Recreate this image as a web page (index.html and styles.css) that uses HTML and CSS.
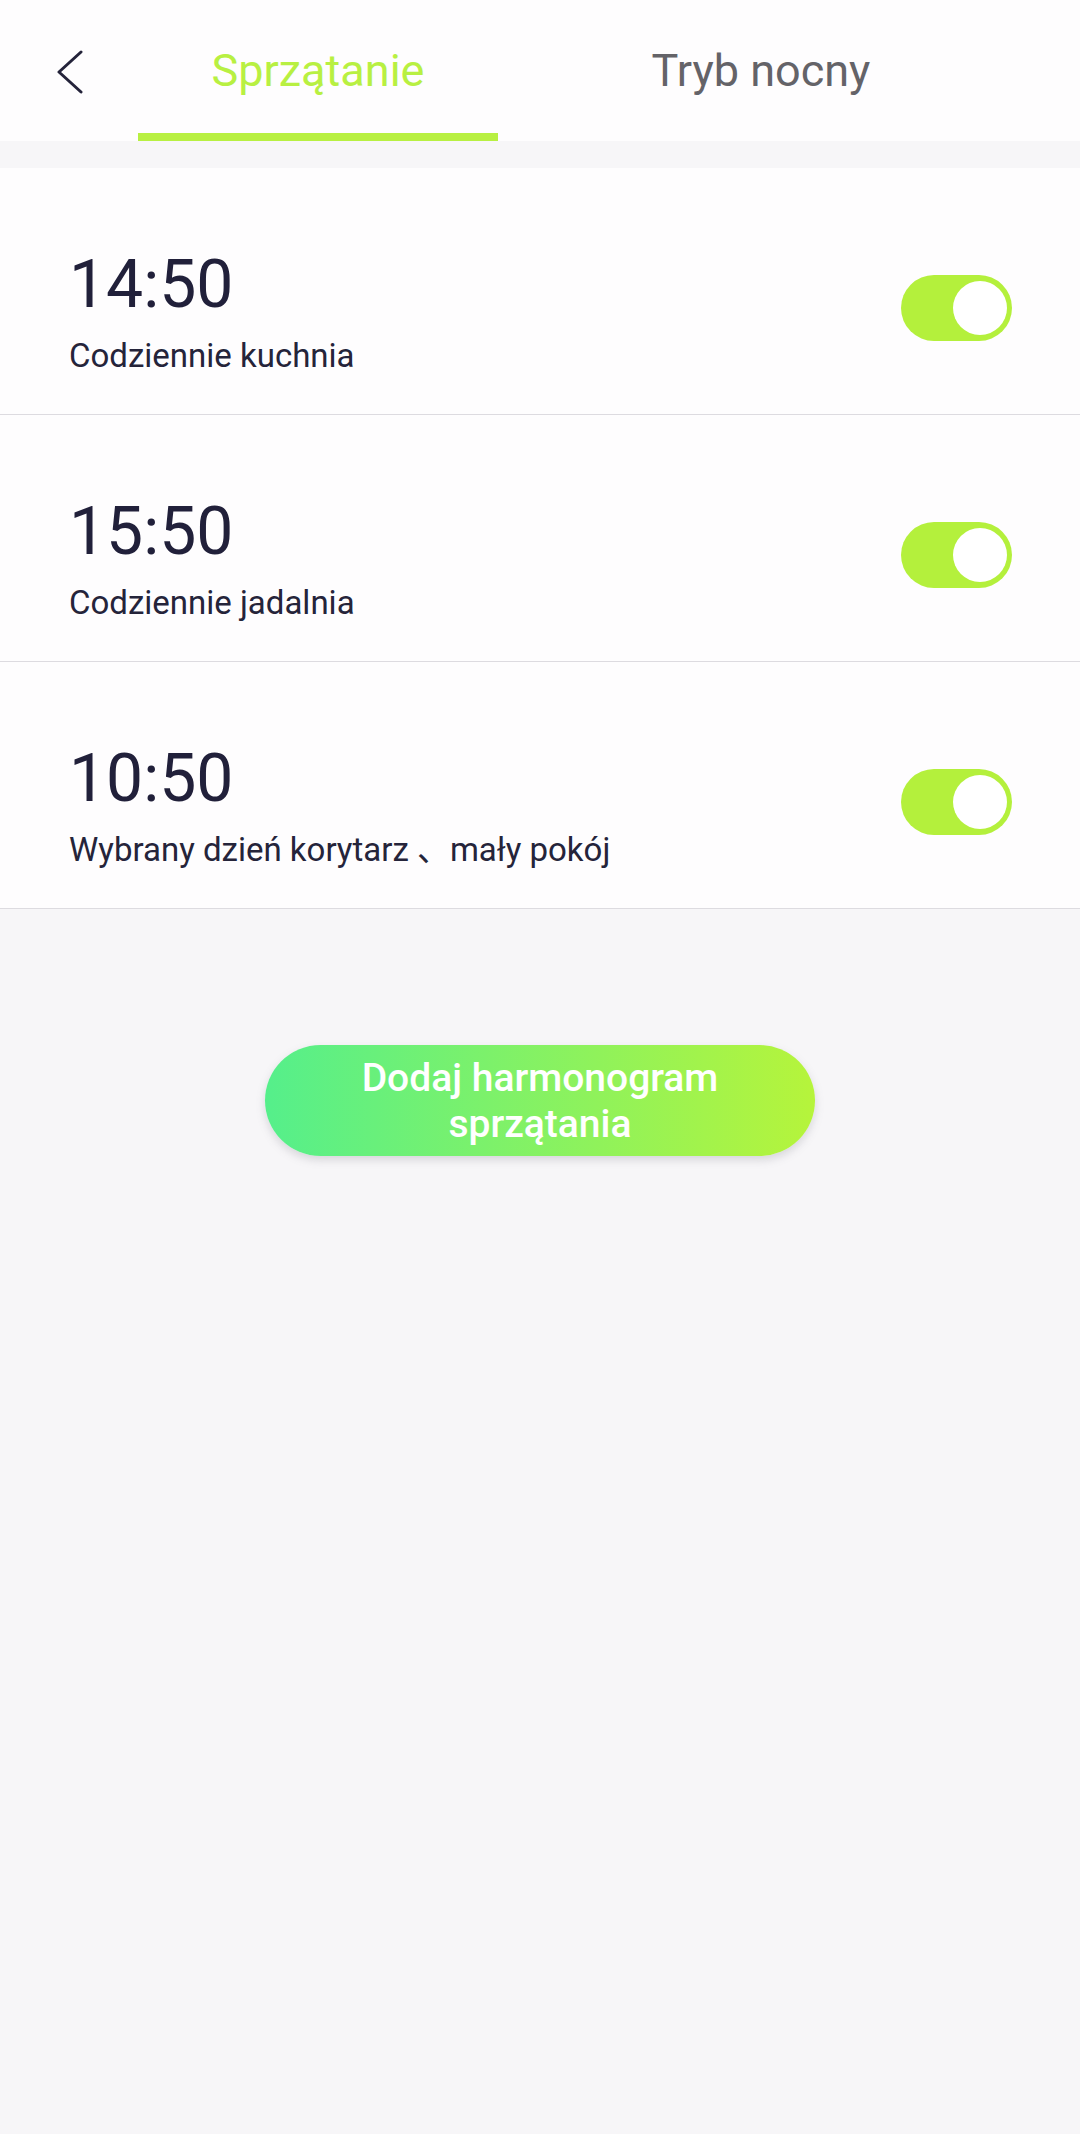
FILE: index.html
```html
<!DOCTYPE html>
<html>
	<head>
		<meta charset="utf-8">
		<link rel="stylesheet" href="styles.css">
	</head>
	<body>
		<div class="header">
			<div class="back">
				<svg width="30" height="44" viewBox="0 0 30 44">
					<path d="M26 2 L4 22 L26 42" fill="none" stroke="#24233a" stroke-width="3" stroke-linecap="round" stroke-linejoin="round"/>
				</svg>
			</div>
			<div class="tab active">Sprzątanie</div>
			<div class="tab second">Tryb nocny</div>
		</div>
		<div class="gap"></div>
		<div class="list">
			<div class="row">
				<div class="info">
					<div class="time">14:50</div>
					<div class="label">Codziennie kuchnia</div>
				</div>
				<div class="toggle on"><span class="knob"></span></div>
			</div>
			<div class="row">
				<div class="info">
					<div class="time">15:50</div>
					<div class="label">Codziennie jadalnia</div>
				</div>
				<div class="toggle on"><span class="knob"></span></div>
			</div>
			<div class="row">
				<div class="info">
					<div class="time">10:50</div>
					<div class="label">Wybrany dzień korytarz <span class="sep">、</span> mały pokój</div>
				</div>
				<div class="toggle on"><span class="knob"></span></div>
			</div>
		</div>
		<div class="actions">
			<div class="add-btn">Dodaj harmonogram<br>sprzątania</div>
		</div>
	</body>
</html>
```

FILE: styles.css
```css
html {
	height: 100%;
}
body {
	margin: 0;
	min-height: 100%;
	background-color: #f7f6f8;
	font-family: Roboto, "Noto Sans", "Noto Sans CJK SC", sans-serif;
	color: #22213a;
}
.header {
	display: flex;
	align-items: stretch;
	height: 141px;
	background-color: #fefdfe;
}
.back {
	width: 138px;
	display: flex;
	align-items: flex-start;
	padding-top: 50px;
	padding-left: 55px;
	box-sizing: border-box;
}
.tab {
	width: 360px;
	box-sizing: border-box;
	padding-top: 43px;
	text-align: center;
	font-size: 45px;
	line-height: 56px;
	color: #646368;
}
.tab.active {
	color: #b8f042;
	border-bottom: 8px solid #b8f042;
}
.tab.second {
	margin-left: 83px;
}
.gap {
	height: 27px;
}
.list {
	background-color: #fefdfe;
}
.row {
	display: flex;
	align-items: center;
	justify-content: space-between;
	padding: 78px 69px 38px 69px;
	border-bottom: 1px solid #dddbe0;
}
.time {
	font-size: 66px;
	line-height: 78px;
	color: #21203a;
}
.label {
	margin-top: 12px;
	font-size: 33px;
	line-height: 40px;
	color: #25243a;
}
.sep {
	letter-spacing: -0.25em;
}
.toggle {
	width: 111px;
	height: 66px;
	border-radius: 33px;
	background-color: #b4f03c;
	position: relative;
	margin-right: -1px;
	margin-bottom: 6px;
}
.knob {
	position: absolute;
	top: 6px;
	right: 5px;
	width: 54px;
	height: 54px;
	border-radius: 50%;
	background-color: #fff;
}
.actions {
	display: flex;
	justify-content: center;
	padding-top: 136px;
}
.add-btn {
	width: 550px;
	height: 111px;
	border-radius: 56px;
	box-sizing: border-box;
	padding-top: 10px;
	background-image: linear-gradient(90deg, #55ef8b, #b6f43b);
	box-shadow: 0 4px 8px rgba(120, 120, 130, 0.25);
	color: #fff;
	font-size: 39px;
	font-weight: 500;
	line-height: 46px;
	text-align: center;
}
```
